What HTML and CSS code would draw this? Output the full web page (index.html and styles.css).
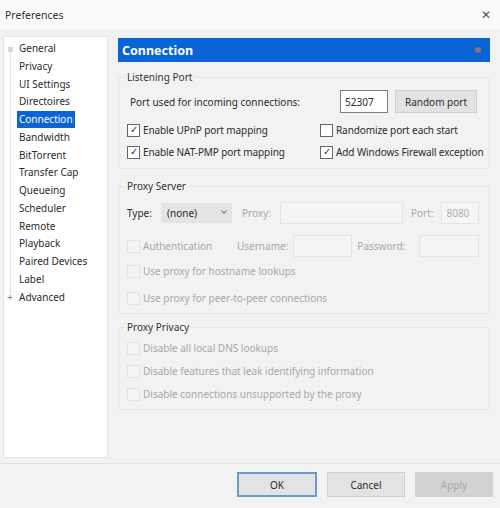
FILE: index.html
```html
<!DOCTYPE html>
<html lang="en">
<head>
<meta charset="utf-8">
<title>Preferences</title>
<link rel="stylesheet" href="styles.css">
</head>
<body>
<div class="window">
  <div class="titlebar">
    <span class="title">Preferences</span>
    <span class="close">✕</span>
  </div>

  <div class="main">
    <ul class="tree">
      <li class="node expander">General</li>
      <li class="node">Privacy</li>
      <li class="node">UI Settings</li>
      <li class="node">Directoires</li>
      <li class="node"><span class="selected">Connection</span></li>
      <li class="node">Bandwidth</li>
      <li class="node">BitTorrent</li>
      <li class="node">Transfer Cap</li>
      <li class="node">Queueing</li>
      <li class="node">Scheduler</li>
      <li class="node">Remote</li>
      <li class="node">Playback</li>
      <li class="node">Paired Devices</li>
      <li class="node">Label</li>
      <li class="node expander plus">Advanced</li>
    </ul>

    <div class="pane">
      <div class="pane-header">
        <span>Connection</span>
        <span class="dot"></span>
      </div>

      <fieldset class="group group-listen">
        <legend>Listening Port</legend>
        <div class="row port-row">
          <span class="label">Port used for incoming connections:</span>
          <span class="input port-input">52307</span>
          <span class="button">Random port</span>
        </div>
        <div class="check-grid">
          <label class="check on">Enable UPnP port mapping</label>
          <label class="check">Randomize port each start</label>
          <label class="check on">Enable NAT-PMP port mapping</label>
          <label class="check on">Add Windows Firewall exception</label>
        </div>
      </fieldset>

      <fieldset class="group group-proxy">
        <legend>Proxy Server</legend>
        <div class="row type-row">
          <span class="label dark">Type:</span>
          <span class="select">(none)<span class="chev"></span></span>
          <span class="label muted">Proxy:</span>
          <span class="input disabled proxy-input"></span>
          <span class="label muted">Port:</span>
          <span class="input disabled small-input">8080</span>
        </div>
        <div class="row auth-row">
          <label class="check off">Authentication</label>
          <span class="label muted user-label">Username:</span>
          <span class="input disabled user-input"></span>
          <span class="label muted">Password:</span>
          <span class="input disabled pass-input"></span>
        </div>
        <label class="check off line">Use proxy for hostname lookups</label>
        <label class="check off line">Use proxy for peer-to-peer connections</label>
      </fieldset>

      <fieldset class="group group-privacy">
        <legend>Proxy Privacy</legend>
        <label class="check off line">Disable all local DNS lookups</label>
        <label class="check off line">Disable features that leak identifying information</label>
        <label class="check off line">Disable connections unsupported by the proxy</label>
      </fieldset>
    </div>
  </div>

  <div class="footer">
    <span class="btn default">OK</span>
    <span class="btn">Cancel</span>
    <span class="btn inactive">Apply</span>
  </div>
</div>
</body>
</html>
```

FILE: styles.css
```css
* {
  box-sizing: border-box;
}

html, body {
  margin: 0;
  padding: 0;
  background: #f2f2f2;
}

body {
  font-family: "Noto Sans", "Open Sans", sans-serif;
  font-size: 10px;
  color: #2b2b2b;
}

.window {
  width: 500px;
  height: 508px;
  display: flex;
  flex-direction: column;
  background: #f2f2f2;
}

/* title bar */
.titlebar {
  height: 29px;
  display: flex;
  align-items: center;
  justify-content: space-between;
  padding: 0 9px 0 5px;
  background: #fafafa;
}

.title {
  font-size: 10.5px;
  color: #333;
}

.close {
  font-size: 12px;
  color: #555;
}

/* body: navigation tree and settings pane */
.main {
  display: flex;
  gap: 10px;
  padding: 7px 10px 0 3px;
  height: 430px;
}

.tree {
  list-style: none;
  margin: 0;
  padding: 3px 0 0 0;
  width: 105px;
  flex-shrink: 0;
  height: 422px;
  background: #fff;
  border: 1px solid #e4e4e4;
  position: relative;
}

.tree::before {
  content: "";
  position: absolute;
  left: 6px;
  top: 10px;
  height: 250px;
  border-left: 1px dotted #c8c8c8;
}

.node {
  height: 17.75px;
  line-height: 17.75px;
  padding-left: 15px;
  white-space: nowrap;
  color: #2b2b2b;
  position: relative;
}

.expander::before {
  content: "";
  position: absolute;
  left: 4px;
  top: 7px;
  width: 5px;
  height: 5px;
  background: #d8d8d8;
}

.plus::before {
  content: "+";
  background: none;
  top: 0;
  left: 3px;
  width: auto;
  height: auto;
  color: #888;
  font-size: 10px;
}

.selected {
  display: inline-block;
  margin-left: -2px;
  padding: 0 2px;
  background: #0a64d6;
  color: #fff;
  line-height: 17px;
}

/* settings pane */
.pane {
  flex: 1;
  min-width: 0;
  display: flex;
  flex-direction: column;
  padding-top: 2px;
}

.pane-header {
  height: 24px;
  background: #0a64d6;
  color: #fff;
  font-weight: 700;
  font-size: 12.5px;
  display: flex;
  align-items: center;
  justify-content: space-between;
  padding: 0 9px 0 4px;
}

.dot {
  width: 6px;
  height: 6px;
  border-radius: 50%;
  background: #9a7a6a;
  opacity: 0.8;
}

.group {
  margin: 0;
  min-width: 0;
  border: 1px solid #e6e6e6;
  border-radius: 2px;
  padding: 0 6px 0 8px;
}

.group legend {
  padding: 0 2px;
  margin-left: -2px;
  color: #333;
  line-height: 14px;
}

.group-listen {
  margin-top: 8px;
  padding-bottom: 7px;
}

.group-proxy {
  margin-top: 10px;
  padding-bottom: 6px;
}

.group-privacy {
  margin-top: 6px;
  padding-bottom: 6px;
}

.row {
  display: flex;
  align-items: center;
}

.port-row {
  margin-top: 6px;
  height: 23px;
}

.port-row .label {
  flex: 1;
  padding-left: 3px;
}

.input {
  height: 23px;
  display: inline-flex;
  align-items: center;
  padding-left: 4px;
  background: #fff;
  border: 1px solid #7f7f7f;
}

.port-input {
  width: 48px;
}

.button {
  height: 23px;
  width: 82px;
  margin-left: 7px;
  margin-right: 6px;
  display: inline-flex;
  align-items: center;
  justify-content: center;
  background: #e3e3e3;
  border: 1px solid #d0d0d0;
}

.check-grid {
  display: grid;
  grid-template-columns: 193px 1fr;
  row-gap: 4px;
  margin-top: 8px;
  letter-spacing: -0.1px;
}

.check {
  display: flex;
  align-items: center;
  height: 18px;
  white-space: nowrap;
}

.check::before {
  content: "";
  width: 11px;
  height: 11px;
  margin-right: 3px;
  border: 1px solid #666;
  background: #fff;
  flex-shrink: 0;
}

.check.on::before {
  content: "✓";
  font-size: 10px;
  line-height: 9px;
  text-align: center;
  color: #333;
}

.check.off {
  color: #a8a8a8;
}

.check.off::before {
  border-color: #e2e2e2;
  background: #f4f4f4;
}

.type-row {
  margin-top: 9px;
  height: 22px;
}

.label.dark {
  color: #2b2b2b;
  width: 34px;
}

.label.muted {
  color: #a8a8a8;
}

.select {
  width: 71px;
  height: 20px;
  background: #e4e4e4;
  display: inline-flex;
  align-items: center;
  padding-left: 6px;
  position: relative;
  margin-right: 10px;
}

.chev {
  position: absolute;
  right: 6px;
  top: 6px;
  width: 4px;
  height: 4px;
  border-right: 1px solid #777;
  border-bottom: 1px solid #777;
  transform: rotate(45deg);
}

.input.disabled {
  background: #f5f5f5;
  border: 1px solid #e3e3e3;
  color: #b0b0b0;
  height: 22px;
}

.proxy-input {
  width: 123px;
  margin-left: 9px;
  margin-right: 8px;
}

.small-input {
  width: 38px;
  margin-left: 8px;
}

.auth-row {
  margin-top: 11px;
  height: 22px;
}

.auth-row .check {
  width: 110px;
}

.user-input {
  width: 59px;
  margin-left: 5px;
  margin-right: 5px;
}

.pass-input {
  width: 60px;
  margin-left: 14px;
}

.line {
  margin-top: 5px;
}

.group-proxy .line + .line {
  margin-top: 9px;
}

.group-privacy .line {
  margin-top: 5px;
}

/* dialog buttons */
.footer {
  margin-top: 4px;
  border-top: 1px solid #e2e2e2;
  flex: 1;
  display: flex;
  justify-content: flex-end;
  align-items: flex-start;
  gap: 10px;
  padding: 8px 7px 0 0;
}

.btn {
  width: 78px;
  height: 25px;
  display: inline-flex;
  align-items: center;
  justify-content: center;
  background: #e3e3e3;
  border: 1px solid #d0d0d0;
}

.btn.default {
  width: 80px;
  border: 2px solid #6a9ad0;
}

.btn.inactive {
  background: #d2d2d2;
  border-color: #d2d2d2;
  color: #a8a8a8;
}
```
